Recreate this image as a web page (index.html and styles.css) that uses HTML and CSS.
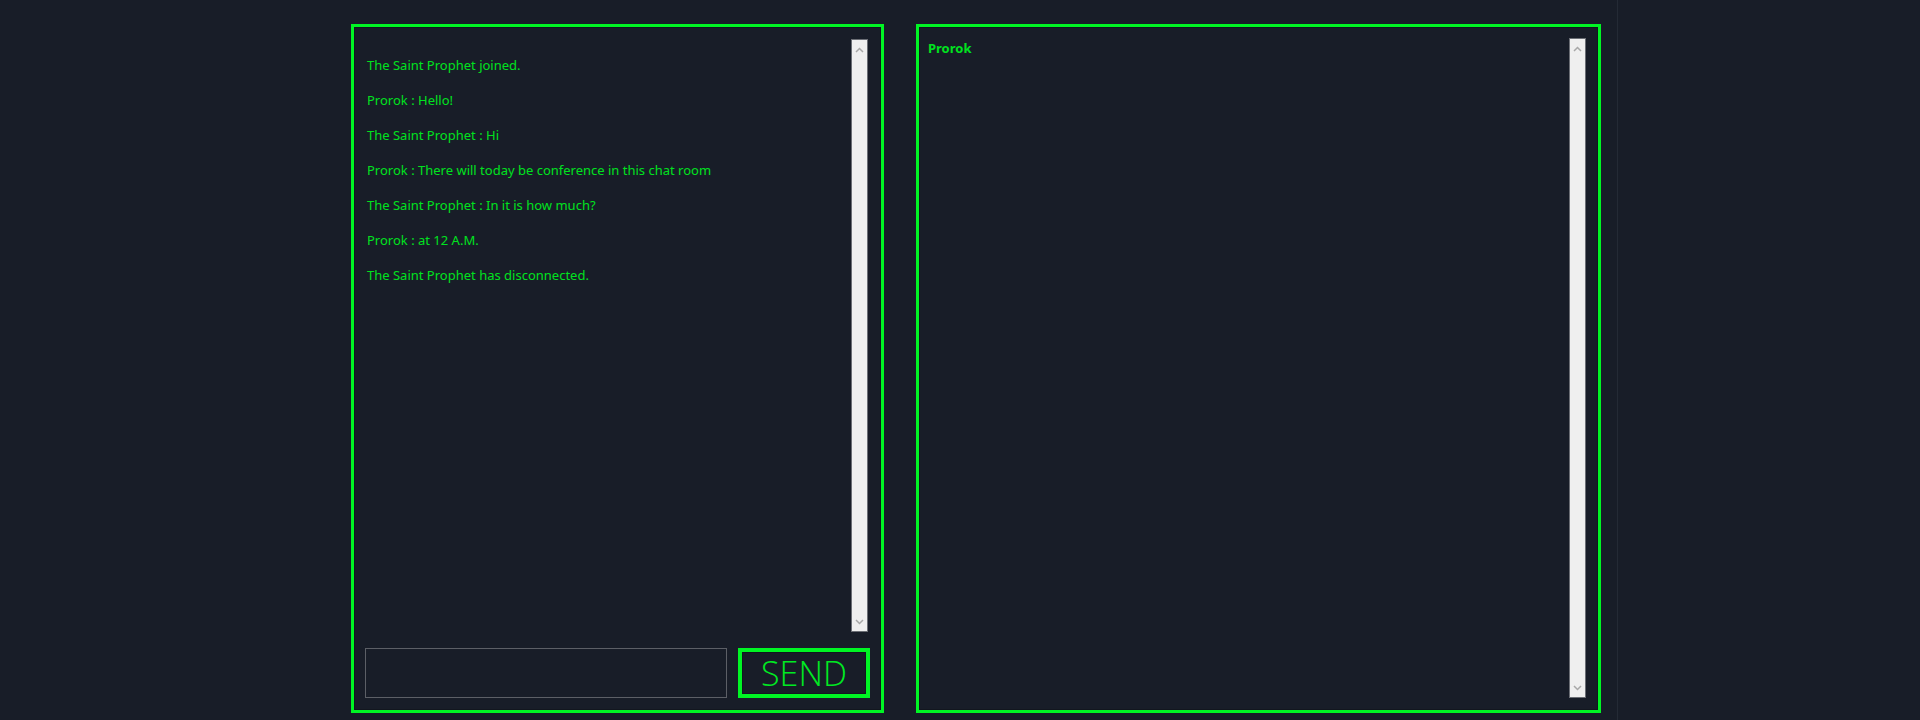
FILE: index.html
```html
<!DOCTYPE html>
<html>
<head>
<meta charset="utf-8">
<link rel="stylesheet" href="styles.css">
</head>
<body>
<div class="page">
  <main class="stage">
    <section class="panel chat">
      <div class="log-box">
        <div class="log">
          <p>The Saint Prophet joined.</p>
          <p>Prorok : Hello!</p>
          <p>The Saint Prophet : Hi</p>
          <p>Prorok : There will today be conference in this chat room</p>
          <p>The Saint Prophet : In it is how much?</p>
          <p>Prorok : at 12 A.M.</p>
          <p>The Saint Prophet has disconnected.</p>
        </div>
        <div class="scrollbar">
          <svg class="arrow" width="9" height="6" viewBox="0 0 9 6"><path d="M1 5 L4.5 1.5 L8 5" fill="none" stroke="#a8a8a8" stroke-width="1.5"/></svg>
          <svg class="arrow" width="9" height="6" viewBox="0 0 9 6"><path d="M1 1 L4.5 4.5 L8 1" fill="none" stroke="#a8a8a8" stroke-width="1.5"/></svg>
        </div>
      </div>
      <div class="composer">
        <input class="msg-input" type="text">
        <button class="send">SEND</button>
      </div>
    </section>
    <section class="panel users">
      <div class="user-list">
        <p class="user">Prorok</p>
      </div>
      <div class="scrollbar">
        <svg class="arrow" width="9" height="6" viewBox="0 0 9 6"><path d="M1 5 L4.5 1.5 L8 5" fill="none" stroke="#a8a8a8" stroke-width="1.5"/></svg>
        <svg class="arrow" width="9" height="6" viewBox="0 0 9 6"><path d="M1 1 L4.5 4.5 L8 1" fill="none" stroke="#a8a8a8" stroke-width="1.5"/></svg>
      </div>
    </section>
  </main>
  <aside class="side"></aside>
</div>
</body>
</html>
```

FILE: styles.css
```css
html, body {
  margin: 0;
  padding: 0;
  background: #181d28;
  height: 720px;
  overflow: hidden;
}

.page {
  display: flex;
  height: 720px;
  font-family: "Noto Sans", "Open Sans", sans-serif;
  color: #00e21f;
}

.stage {
  width: 1617px;
  display: flex;
  gap: 32px;
  padding: 24px 0 7px 351px;
  box-sizing: border-box;
}

.side {
  flex: 1;
  border-left: 1px solid #242a35;
}

.panel {
  box-sizing: border-box;
  border: 3px solid #00f524;
  box-shadow: inset 0 0 0 1px #12161f;
  height: 689px;
}

.chat {
  width: 533px;
  display: flex;
  flex-direction: column;
  padding: 12px 11px 12px 11px;
}

.log-box {
  flex: 1;
  display: flex;
  min-height: 0;
  margin-right: 2px;
}

.log {
  flex: 1;
  padding: 18px 0 0 2px;
}

.log p {
  margin: 0 0 17.5px;
  font-size: 13px;
  line-height: 17.5px;
}

.scrollbar {
  width: 17px;
  background: #efefef;
  border: 1px solid #6b6e75;
  display: flex;
  flex-direction: column;
  justify-content: space-between;
  align-items: center;
  padding: 7px 0 6px;
  box-sizing: border-box;
}

.composer {
  display: flex;
  gap: 11px;
  margin-top: 16px;
  height: 50px;
}

.msg-input {
  width: 362px;
  flex: none;
  height: 50px;
  box-sizing: border-box;
  background: transparent;
  border: 1px solid #5c5f66;
  margin: 0;
  padding: 0 8px;
  outline: none;
}

.send {
  width: 132px;
  flex: none;
  height: 50px;
  box-sizing: border-box;
  background: transparent;
  border: 4px solid #00f524;
  box-shadow: inset 0 0 0 1px #12161f;
  color: #00ea22;
  font-family: "Open Sans", sans-serif;
  font-weight: 300;
  font-size: 34px;
  line-height: 40px;
  padding: 0;
  margin: 0;
}

.users {
  width: 685px;
  display: flex;
  padding: 11px 12px 12px 9px;
}

.user-list {
  flex: 1;
  padding-top: 2px;
}

.user {
  margin: 0;
  font-size: 13px;
  font-weight: 700;
  line-height: 17px;
}
```
